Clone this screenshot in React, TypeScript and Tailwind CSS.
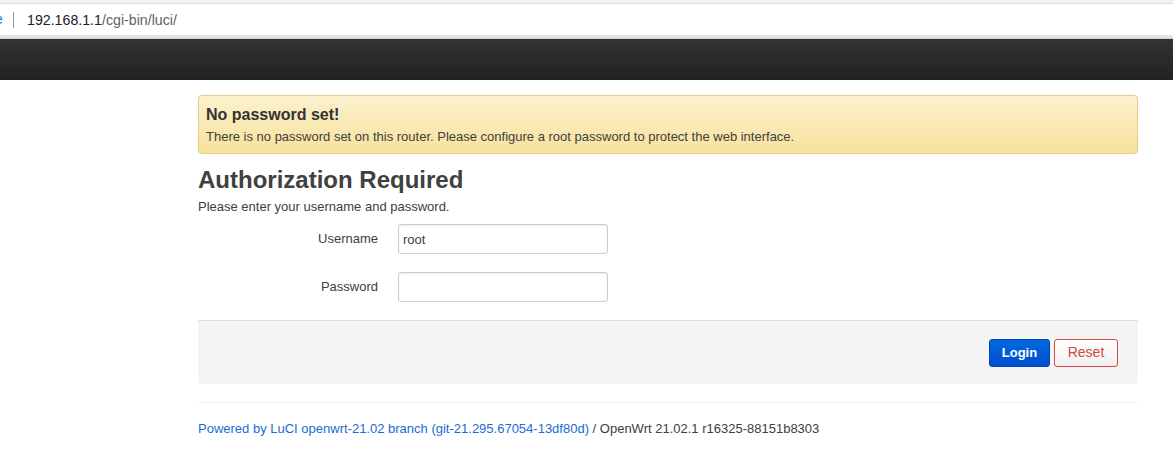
export default function App() {
  return (
    <div className="min-h-[453px] bg-white font-['Liberation_Sans',Arial,sans-serif] text-[#404040]">
      <div className="h-[4px] bg-[#f1f1f1] border-b border-[#dcdcdc]" />
      <div className="flex h-[31px] items-center bg-white">
        <span className="-ml-[5px] w-[8px] overflow-hidden text-[14px] text-[#1a73e8]">e</span>
        <span className="ml-[10px] h-[16px] w-px bg-[#9a9a9a]" />
        <span className="ml-[13px] mt-[2px] text-[14.2px]">
          <span className="text-[#202124]">192.168.1.1</span>
          <span className="text-[#5f6368]">/cgi-bin/luci/</span>
        </span>
      </div>
      <div className="h-[4px] bg-[#e4e4e4] border-b border-[#cfcfcf]" />
      <div className="h-[41px] bg-gradient-to-b from-[#333333] to-[#222222]" />

      <div className="ml-[198px] w-[940px] pt-[15px]">
        <div className="h-[59px] rounded-[4px] border border-[#e3cc86] bg-gradient-to-b from-[#fbf1cd] to-[#f8e29d] px-[7px] pt-[10px]">
          <h4 className="text-[16px] font-bold leading-[18px] text-[#333]">No password set!</h4>
          <p className="mt-[5px] text-[13px] leading-[16px] text-[#404040]">
            There is no password set on this router. Please configure a root password to protect the web interface.
          </p>
        </div>

        <h2 className="mt-[12px] text-[24px] font-bold leading-[28px] text-[#404040]">Authorization Required</h2>
        <p className="mt-[5px] text-[13px] leading-[16px]">Please enter your username and password.</p>

        <div className="mt-[9px] flex flex-col gap-[18px]">
          <div className="flex items-center">
            <label className="w-[180px] text-right text-[13px]">Username</label>
            <input
              defaultValue="root"
              className="ml-[20px] h-[30px] w-[210px] rounded-[3px] border border-[#cccccc] px-[4px] text-[13px] text-[#404040] shadow-[inset_0_1px_2px_rgba(0,0,0,0.08)] outline-none"
            />
          </div>
          <div className="flex items-center">
            <label className="w-[180px] text-right text-[13px]">Password</label>
            <input
              type="password"
              className="ml-[20px] h-[30px] w-[210px] rounded-[3px] border border-[#cccccc] px-[4px] text-[13px] shadow-[inset_0_1px_2px_rgba(0,0,0,0.08)] outline-none"
            />
          </div>
        </div>

        <div className="mt-[18px] flex h-[64px] items-center justify-end gap-[4px] rounded-b-[4px] border-t border-[#dddddd] bg-[#f4f4f4] pr-[20px]">
          <button className="h-[28px] w-[61px] rounded-[3px] border border-[#0047b3] bg-gradient-to-b from-[#0069e0] to-[#004fd0] text-[13px] font-bold text-white">
            Login
          </button>
          <button className="h-[28px] w-[64px] rounded-[3px] border border-[#d44a45] bg-gradient-to-b from-white to-[#f0f0f0] text-[14px] text-[#d44a45]">
            Reset
          </button>
        </div>

        <div className="mt-[18px] border-t border-[#eeeeee] pt-[18px] text-[13px] leading-[16px]">
          <span className="text-[#1b6bd6]">Powered by LuCI openwrt-21.02 branch (git-21.295.67054-13df80d)</span>
          <span className="text-[#404040]"> / OpenWrt 21.02.1 r16325-88151b8303</span>
        </div>
      </div>
    </div>
  );
}
